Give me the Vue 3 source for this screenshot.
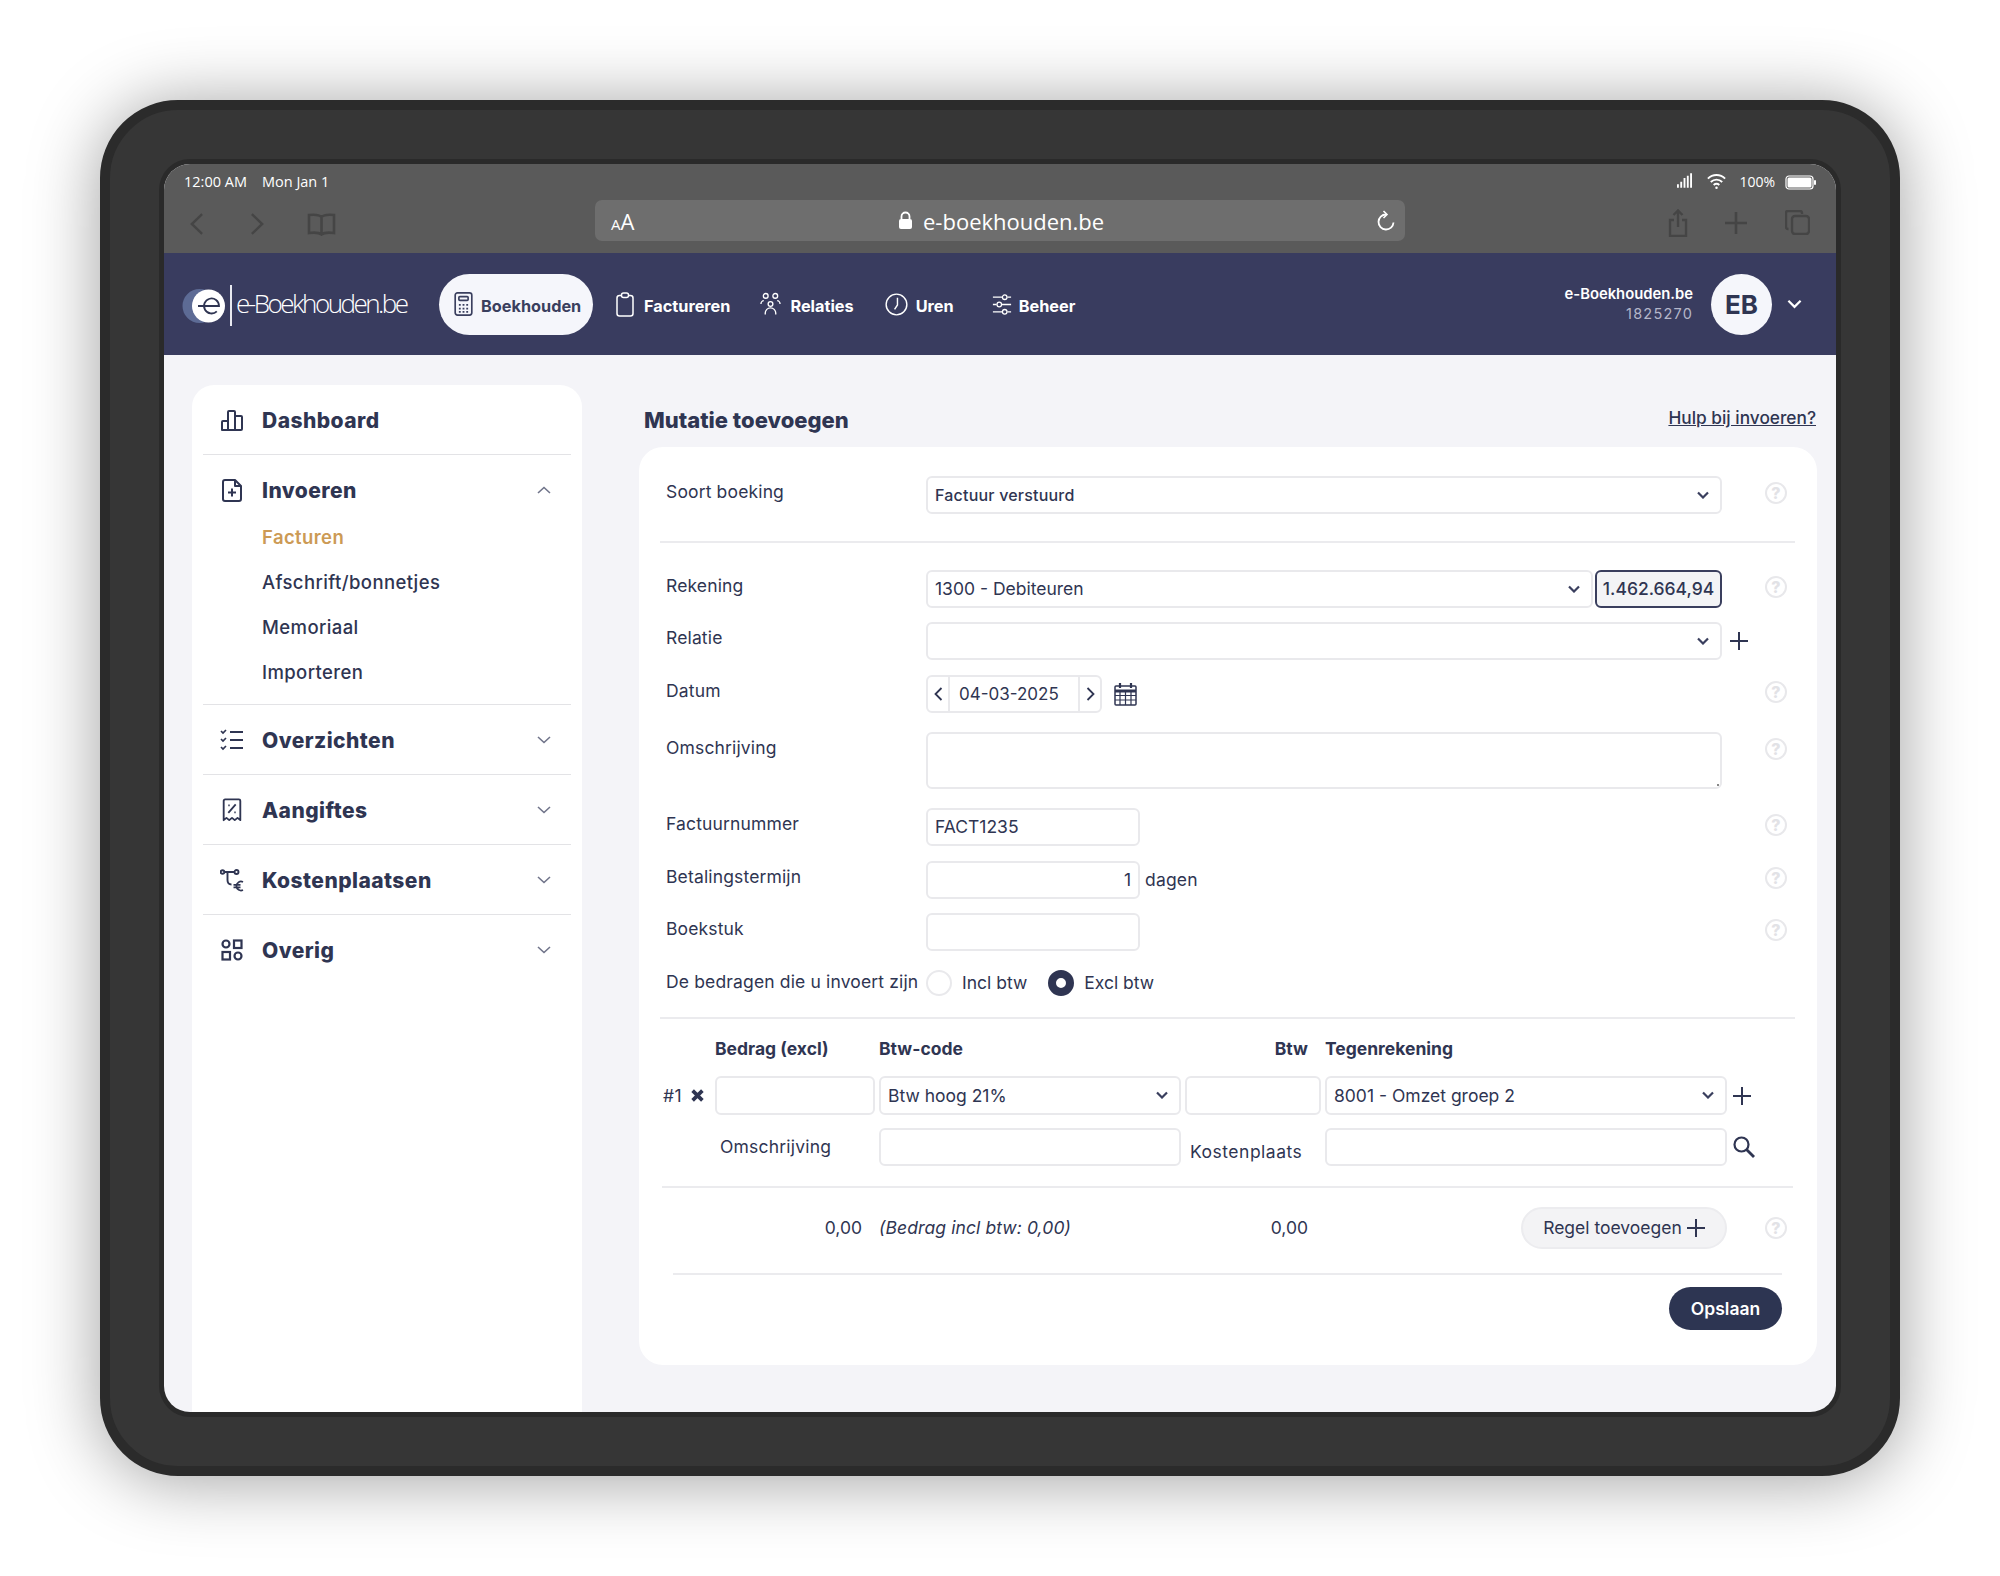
<script setup>
const helpMark = '?'
const subItems = [
  { label: 'Facturen', active: true },
  { label: 'Afschrift/bonnetjes', active: false },
  { label: 'Memoriaal', active: false },
  { label: 'Importeren', active: false },
]
</script>

<template>
  <div class="page">
    <div class="device">
      <div class="screen">
        <div class="chrome">
          <div class="status">
            <span class="status-time">12:00 AM</span>
            <span class="status-date">Mon Jan 1</span>
            <span class="status-right">
              <svg class="ic-signal" viewBox="0 0 16 14" preserveAspectRatio="none"><path d="M1 13v-3M4.500 13V8M8 13V5M11.500 13V3M15 13V1" stroke="#fff" stroke-width="2" fill="none"/></svg>
              <svg class="ic-wifi" viewBox="0 0 22 18" fill="none" stroke="#fff" stroke-width="2"><path d="M2 6.500c5-5 13-5 18 0M5 10c3.500-3.200 8.500-3.200 12 0M8 13.200c1.800-1.500 4.200-1.500 6 0"/><circle cx="11" cy="16" r="1.300" fill="#fff" stroke="none"/></svg>
              <span class="status-pct">100%</span>
              <svg class="ic-batt" viewBox="0 0 31 15"><rect x="1" y="1" width="27" height="13" rx="3" fill="none" stroke="#fff" stroke-width="1.200"/><rect x="2.500" y="2.500" width="24" height="10" rx="1.500" fill="#fff"/><rect x="29" y="5" width="2" height="5" rx="1" fill="#fff"/></svg>
            </span>
          </div>
          <div class="toolbar">
            <div class="tool-left">
              <svg class="t-chev" viewBox="0 0 16 24" fill="none" stroke="#454545" stroke-width="2.600"><path d="M14 1.500 3 12l11 10.500"/></svg>
              <svg class="t-chev t-fwd" viewBox="0 0 16 24" fill="none" stroke="#454545" stroke-width="2.600"><path d="M2 1.500 13 12 2 22.500"/></svg>
              <svg class="t-book" viewBox="0 0 29 23" fill="none" stroke="#454545" stroke-width="2.600"><path d="M14.500 4C12 1.500 6 1.500 2 2v18c4-.5 10-.5 12.500 1.500C17 19.500 23 19.500 27 20V2c-4-.5-10-.5-12.500 2Zm0 0v17"/></svg>
            </div>
            <div class="address">
              <span class="aa"><small>A</small>A</span>
              <span class="url">
                <svg class="ic-lock" viewBox="0 0 15 19"><path d="M3.500 8V5.500a4 4 0 0 1 8 0V8" fill="none" stroke="#fff" stroke-width="1.800"/><rect x="1" y="8" width="13" height="10" rx="2" fill="#fff"/></svg>
                e-boekhouden.be
              </span>
              <svg class="ic-reload" viewBox="0 0 20 22" fill="none" stroke="#fff" stroke-width="1.800"><path d="M11 4.500a7.500 7.500 0 1 0 7.500 8"/><path d="M8.500 1 12 4.500 8.500 8" stroke-width="1.600"/></svg>
            </div>
            <div class="tool-right">
              <svg class="t-share" viewBox="0 0 20 28" fill="none" stroke="#454545" stroke-width="2.400"><path d="M6 11H2v16h16V11h-4M10 18V2M5.500 6 10 1.500 14.500 6"/></svg>
              <svg class="t-plus" viewBox="0 0 24 24" fill="none" stroke="#454545" stroke-width="2.600"><path d="M12 1v22M1 12h22"/></svg>
              <svg class="t-tabs" viewBox="0 0 25 25" fill="none" stroke="#454545" stroke-width="2.400"><rect x="7" y="6" width="17" height="18" rx="3"/><path d="M3.500 19H3a2 2 0 0 1-2-2V3a2 2 0 0 1 2-2h12a2 2 0 0 1 2 2v1"/></svg>
            </div>
          </div>
        </div>

        <header class="nav">
          <div class="logo">
            <svg class="logo-mark" viewBox="0 0 44 36">
              <circle cx="17.500" cy="18" r="17" fill="#5d6b95"/>
              <circle cx="26.500" cy="18" r="16.500" fill="#fff"/>
              <path d="M16 18h21a7.500 7.500 0 1 0-2.200 5.300" fill="none" stroke="#2f3552" stroke-width="1.800"/>
            </svg>
            <span class="logo-bar"></span>
            <span class="logo-text">e-Boekhouden.be</span>
          </div>
          <nav class="menu">
            <a class="menu-item pill">
              <svg class="m-ic" viewBox="0 0 20 26" fill="none" stroke="#3a3f5e" stroke-width="1.800"><rect x="1" y="1" width="18" height="24" rx="2.500"/><rect x="5" y="5" width="10" height="4" rx="1"/><path d="M5 14h2M9 14h2M13 14h2M5 18h2M9 18h2M13 18h2M5 21.500h2M9 21.500h2M13 21.500h2"/></svg>
              Boekhouden
            </a>
            <a class="menu-item fact">
              <svg class="m-ic" viewBox="0 0 18 25" fill="none" stroke="#fff" stroke-width="1.500"><rect x="1" y="3.500" width="16" height="20.500" rx="2.500"/><rect x="5.500" y="1" width="7" height="4.500" rx="2" fill="#393c5f"/></svg>
              Factureren
            </a>
            <a class="menu-item rel">
              <svg class="m-ic" viewBox="0 0 22 24" fill="none" stroke="#fff" stroke-width="1.400"><circle cx="6" cy="3.500" r="2.500"/><circle cx="16" cy="3.500" r="2.500"/><circle cx="11" cy="12" r="2.500"/><path d="M1 12c0-2 1.500-3.500 3-3.500M21 12c0-2-1.500-3.500-3-3.500M5.500 23v-1.500a5.500 5.500 0 0 1 11 0V23"/></svg>
              Relaties
            </a>
            <a class="menu-item ur">
              <svg class="m-ic" viewBox="0 0 24 24" fill="none" stroke="#fff" stroke-width="1.500"><circle cx="12" cy="12" r="10.800"/><path d="M13 5v7.500L10 17"/></svg>
              Uren
            </a>
            <a class="menu-item beh">
              <svg class="m-ic" viewBox="0 0 22 24" fill="none" stroke="#fff" stroke-width="1.400"><path d="M1 4h10M17 4h4M1 12h4M11 12h10M1 20h10M17 20h4"/><circle cx="14" cy="4" r="2.500"/><circle cx="8" cy="12" r="2.500"/><circle cx="14" cy="20" r="2.500"/></svg>
              Beheer
            </a>
          </nav>
          <div class="account">
            <div class="acc-text">
              <div class="acc-name">e-Boekhouden.be</div>
              <div class="acc-id">1825270</div>
            </div>
            <div class="avatar">EB</div>
            <svg class="acc-chev" viewBox="0 0 16 10" fill="none" stroke="#fff" stroke-width="2.400"><path d="M1.500 1.500 8 8l6.500-6.500"/></svg>
          </div>
        </header>

        <div class="body">
          <aside class="side">
            <div class="group">
              <div class="head">
                <svg class="s-ic" viewBox="0 0 24 22" fill="none" stroke="#2f3552" stroke-width="2" stroke-linejoin="round"><path d="M2 21v-8a1 1 0 0 1 1-1h5v9H3a1 1 0 0 1-1-1Zm6 0V3a1 1 0 0 1 1-1h5a1 1 0 0 1 1 1v18Zm7-14h6a1 1 0 0 1 1 1v12a1 1 0 0 1-1 1h-6"/></svg>
                <span class="head-label">Dashboard</span>
              </div>
            </div>
            <div class="group open">
              <div class="head">
                <svg class="s-ic" viewBox="0 0 24 24" fill="none" stroke="#2f3552" stroke-width="2" stroke-linejoin="round"><path d="M5 2h10l6 6v13a2 2 0 0 1-2 2H5a2 2 0 0 1-2-2V4a2 2 0 0 1 2-2Z"/><path d="M15 2v6h6M12 10.500v8M8 14.500h8"/></svg>
                <span class="head-label">Invoeren</span>
                <svg class="s-chev" viewBox="0 0 14 8" fill="none" stroke="#70748a" stroke-width="1.600"><path d="M1 7l6-5.500L13 7"/></svg>
              </div>
              <ul class="subs">
                <li v-for="item in subItems" :key="item.label" class="sub" :class="{ active: item.active }">{{ item.label }}</li>
              </ul>
            </div>
            <div class="group">
              <div class="head">
                <svg class="s-ic" viewBox="0 0 24 22" fill="none" stroke="#2f3552" stroke-width="2"><path d="M10 3h13M10 11h13M10 19h13"/><path d="M1 2l2 2 3-3M1 10l2 2 3-3M1 18l2 2 3-3" stroke-width="1.700"/></svg>
                <span class="head-label">Overzichten</span>
                <svg class="s-chev" viewBox="0 0 14 8" fill="none" stroke="#70748a" stroke-width="1.600"><path d="M1 1l6 5.500L13 1"/></svg>
              </div>
            </div>
            <div class="group">
              <div class="head">
                <svg class="s-ic" viewBox="0 0 24 26" fill="none" stroke="#2f3552" stroke-width="2" stroke-linejoin="round"><path d="M3 24V3a1.500 1.500 0 0 1 1.500-1.500h15A1.500 1.500 0 0 1 21 3v21l-3-2.500-3 2.500-3-2.500L9 24l-3-2.500Z"/><path d="M8 16 16 7M8 8h1.500M14.500 15.500H16"/></svg>
                <span class="head-label">Aangiftes</span>
                <svg class="s-chev" viewBox="0 0 14 8" fill="none" stroke="#70748a" stroke-width="1.600"><path d="M1 1l6 5.500L13 1"/></svg>
              </div>
            </div>
            <div class="group">
              <div class="head">
                <svg class="s-ic" viewBox="0 0 24 22" fill="none" stroke="#2f3552" stroke-width="1.900"><circle cx="2.500" cy="3" r="1.800"/><circle cx="16.500" cy="3" r="2"/><path d="M4.500 3h10M7.500 3v8c0 3 1.500 4.500 4 4.500"/><path d="M23 13a4.500 4.500 0 1 0 0 8M13.500 15.800h7M13.500 18.400h7" stroke-width="1.700"/></svg>
                <span class="head-label">Kostenplaatsen</span>
                <svg class="s-chev" viewBox="0 0 14 8" fill="none" stroke="#70748a" stroke-width="1.600"><path d="M1 1l6 5.500L13 1"/></svg>
              </div>
            </div>
            <div class="group last">
              <div class="head">
                <svg class="s-ic" viewBox="0 0 24 22" fill="none" stroke="#2f3552" stroke-width="2.200"><circle cx="6" cy="5" r="3.500"/><rect x="14" y="1.500" width="7.500" height="7.500"/><rect x="2.500" y="13" width="7.500" height="7.500"/><circle cx="18" cy="17" r="3.500"/></svg>
                <span class="head-label">Overig</span>
                <svg class="s-chev" viewBox="0 0 14 8" fill="none" stroke="#70748a" stroke-width="1.600"><path d="M1 1l6 5.500L13 1"/></svg>
              </div>
            </div>
          </aside>

          <main class="main">
            <div class="title-row">
              <h1 class="title">Mutatie toevoegen</h1>
              <a class="help-link">Hulp bij invoeren?</a>
            </div>
            <section class="card">
              <div class="row first">
                <label class="lbl">Soort boeking</label>
                <div class="field small">
                  <span>Factuur verstuurd</span>
                  <svg class="chev" viewBox="0 0 12 8" fill="none" stroke="#3a3f5e" stroke-width="2.200"><path d="M1 1.500 6 6.500l5-5"/></svg>
                </div>
                <div class="extra"><span class="help">{{ helpMark }}</span></div>
              </div>
              <hr class="rule r1" />
              <div class="row">
                <label class="lbl">Rekening</label>
                <div class="split">
                  <div class="field">
                    <span>1300 - Debiteuren</span>
                    <svg class="chev" viewBox="0 0 12 8" fill="none" stroke="#3a3f5e" stroke-width="2.200"><path d="M1 1.500 6 6.500l5-5"/></svg>
                  </div>
                  <div class="balance">1.462.664,94</div>
                </div>
                <div class="extra"><span class="help">{{ helpMark }}</span></div>
              </div>
              <div class="row g14">
                <label class="lbl">Relatie</label>
                <div class="field">
                  <span></span>
                  <svg class="chev" viewBox="0 0 12 8" fill="none" stroke="#3a3f5e" stroke-width="2.200"><path d="M1 1.500 6 6.500l5-5"/></svg>
                </div>
                <div class="extra">
                  <svg class="plus" viewBox="0 0 18 18" fill="none" stroke="#2f3552" stroke-width="2"><path d="M9 0v18M0 9h18"/></svg>
                </div>
              </div>
              <div class="row g15">
                <label class="lbl">Datum</label>
                <div class="date-wrap">
                  <div class="date">
                    <span class="date-btn">
                      <svg class="date-chev" viewBox="0 0 9 14" fill="none" stroke="#2f3552" stroke-width="1.800"><path d="M7.500 1 1.500 7l6 6"/></svg>
                    </span>
                    <span class="date-val">04-03-2025</span>
                    <span class="date-btn next">
                      <svg class="date-chev" viewBox="0 0 9 14" fill="none" stroke="#2f3552" stroke-width="1.800"><path d="M1.500 1l6 6-6 6"/></svg>
                    </span>
                  </div>
                  <svg class="cal" viewBox="0 0 23 24" fill="none" stroke="#2f3552" stroke-width="1.500"><rect x="1" y="4" width="21" height="19" rx="1"/><path d="M1 9h21" stroke-width="3"/><path d="M1 13.500h21M1 18h21M6 9v14M11.500 9v14M17 9v14" stroke-width="1.200"/><path d="M6 1v5M17 1v5" stroke-width="2.200"/></svg>
                </div>
                <div class="extra"><span class="help">{{ helpMark }}</span></div>
              </div>
              <div class="row g19">
                <label class="lbl">Omschrijving</label>
                <div class="field area"></div>
                <div class="extra"><span class="help">{{ helpMark }}</span></div>
              </div>
              <div class="row g19">
                <label class="lbl">Factuurnummer</label>
                <div class="field narrow"><span>FACT1235</span></div>
                <div class="extra"><span class="help">{{ helpMark }}</span></div>
              </div>
              <div class="row g15">
                <label class="lbl">Betalingstermijn</label>
                <div class="with-unit">
                  <div class="field narrow end"><span>1</span></div>
                  <span class="unit">dagen</span>
                </div>
                <div class="extra"><span class="help">{{ helpMark }}</span></div>
              </div>
              <div class="row g14">
                <label class="lbl">Boekstuk</label>
                <div class="field narrow"></div>
                <div class="extra"><span class="help">{{ helpMark }}</span></div>
              </div>
              <div class="row radio-row">
                <label class="lbl inline">De bedragen die u invoert zijn</label>
                <div class="radios">
                  <span class="radio"></span>
                  <span class="radio-label">Incl btw</span>
                  <span class="radio on"></span>
                  <span class="radio-label">Excl btw</span>
                </div>
              </div>
              <hr class="rule r2" />

              <div class="lines heads">
                <span></span>
                <span class="th">Bedrag (excl)</span>
                <span class="th">Btw-code</span>
                <span class="th right">Btw</span>
                <span class="th">Tegenrekening</span>
              </div>
              <div class="lines line-a">
                <div class="line-no">
                  <span>#1</span>
                  <svg class="del" viewBox="0 0 12 12" fill="none" stroke="#2f3552" stroke-width="3.400"><path d="M1.500 1.500l9 9M10.500 1.500l-9 9"/></svg>
                </div>
                <div class="field tall"></div>
                <div class="field tall">
                  <span>Btw hoog 21%</span>
                  <svg class="chev" viewBox="0 0 12 8" fill="none" stroke="#3a3f5e" stroke-width="2.200"><path d="M1 1.500 6 6.500l5-5"/></svg>
                </div>
                <div class="field tall"></div>
                <div class="field tall">
                  <span>8001 - Omzet groep 2</span>
                  <svg class="chev" viewBox="0 0 12 8" fill="none" stroke="#3a3f5e" stroke-width="2.200"><path d="M1 1.500 6 6.500l5-5"/></svg>
                </div>
                <svg class="plus line-plus" viewBox="0 0 18 18" fill="none" stroke="#2f3552" stroke-width="2"><path d="M9 0v18M0 9h18"/></svg>
              </div>
              <div class="lines line-b">
                <span></span>
                <span class="mini">Omschrijving</span>
                <div class="field"></div>
                <span class="mini low">Kostenplaats</span>
                <div class="field"></div>
                <svg class="search" viewBox="0 0 22 22" fill="none" stroke="#2f3552" stroke-width="2.200"><circle cx="8.500" cy="8.500" r="7"/><path d="M13.500 13.500 21 21" stroke-width="2.800"/></svg>
              </div>
              <hr class="rule r3" />
              <div class="lines totals">
                <span></span>
                <span class="num">0,00</span>
                <span class="incl">(Bedrag incl btw: 0,00)</span>
                <span class="num">0,00</span>
                <div class="add-wrap">
                  <button class="add">Regel toevoegen
                    <svg class="add-plus" viewBox="0 0 18 18" fill="none" stroke="#2f3552" stroke-width="2"><path d="M9 0v18M0 9h18"/></svg>
                  </button>
                </div>
                <div class="extra"><span class="help">{{ helpMark }}</span></div>
              </div>
              <hr class="rule r4" />
              <div class="save-row"><button class="save">Opslaan</button></div>
            </section>
          </main>
        </div>
      </div>
    </div>
  </div>
</template>

<style>
html, body { margin: 0; background: #fff; }
</style>

<style scoped>
* { box-sizing: border-box; }
.page { width: 2000px; height: 1576px; padding: 100px; font-family: Inter, "Liberation Sans", sans-serif; color: #2f3552; }
.device { width: 1800px; height: 1376px; border: 10px solid #2b2b2b; border-radius: 78px; background: #363636; padding: 54px; box-shadow: 0 4px 70px rgba(0, 0, 0, .38); }
.screen { width: 1672px; height: 1248px; border-radius: 26px; overflow: hidden; background: #f4f4f8; box-shadow: 0 0 0 5px #2a2a2a; display: flex; flex-direction: column; }

.chrome { height: 89px; background: #5a5a5a; color: #fff; font-family: "Open Sans", sans-serif; flex: none; }
.status { height: 36px; padding: 0 20px 0 20px; display: flex; align-items: center; font-size: 14.500px; }
.status-time, .status-date, .status-pct { position: relative; top: -1px; }
.status-date { margin-left: 15px; }
.status-right { margin-left: auto; display: flex; align-items: center; }
.ic-signal { width: 15px; height: 17px; margin-top: -3px; }
.ic-wifi { width: 21px; height: 18px; margin-left: 14px; margin-top: -2px; }
.status-pct { margin-left: 12px; font-size: 14px; }
.ic-batt { width: 31px; height: 15px; margin-left: 10px; }
.toolbar { height: 53px; display: flex; align-items: flex-start; position: relative; }
.tool-left { width: 431px; height: 48px; padding-left: 25px; display: flex; align-items: center; }
.t-chev { width: 15px; height: 24px; }
.t-fwd { margin-left: 46px; }
.t-book { width: 29px; height: 23px; margin-left: 42px; }
.address { width: 810px; height: 41px; background: #6e6e6e; border-radius: 7px; display: flex; align-items: center; padding: 0 10px 0 16px; position: relative; }
.aa { font-size: 22px; line-height: 1; }
.aa small { font-size: 15px; }
.url { position: absolute; left: 303px; top: 0; height: 41px; display: flex; align-items: center; font-size: 22px; }
.ic-lock { width: 15px; height: 19px; margin-right: 10px; }
.ic-reload { width: 20px; height: 22px; margin-left: auto; }
.tool-right { flex: 1; height: 45px; display: flex; align-items: center; padding-left: 263px; }
.t-share { width: 20px; height: 28px; }
.t-plus { width: 24px; height: 24px; margin-left: 36px; }
.t-tabs { width: 25px; height: 25px; margin-left: 37px; }

.nav { height: 102px; flex: none; background: #393c5f; display: flex; align-items: center; color: #fff; padding: 0 34px 0 18px; }
.logo { display: flex; align-items: center; width: 257px; margin-top: 3px; }
.logo-mark { width: 44px; height: 36px; flex: none; }
.logo-bar { width: 2px; height: 41px; background: #e8e9f0; margin-left: 4px; }
.logo-text { font-family: "Open Sans", sans-serif; font-weight: 300; font-size: 26px; letter-spacing: -2.500px; margin: -5px 0 0 4px; white-space: nowrap; }
.menu { display: flex; align-items: center; height: 61px; }
.menu-item { display: flex; align-items: center; font-size: 16.300px; font-weight: 700; white-space: nowrap; }
.pill { width: 154px; height: 61px; background: #f5f6fb; border-radius: 31px; color: #3a3f5e; padding: 3px 0 0 15px; }
.pill .m-ic { width: 19px; height: 24px; margin-right: 8px; margin-top: -3px; }
.fact { margin-left: 23px; margin-top: 4px; }
.fact .m-ic { width: 18px; height: 25px; margin-right: 10px; margin-top: -4px; }
.rel { margin-left: 30px; margin-top: 4px; }
.rel .m-ic { width: 21px; height: 24px; margin-right: 9px; margin-top: -4px; }
.ur { margin-left: 31px; margin-top: 4px; }
.ur .m-ic { width: 23px; height: 23px; margin-right: 8px; margin-top: -4px; }
.beh { margin-left: 38px; margin-top: 4px; }
.beh .m-ic { width: 20px; height: 23px; margin-right: 7px; margin-top: -4px; }
.account { margin-left: auto; display: flex; align-items: center; }
.acc-text { text-align: right; margin-right: 18px; }
.acc-name { font-size: 14.800px; font-weight: 600; line-height: 19px; }
.acc-id { font-size: 14.500px; line-height: 19px; color: #b4b6c9; letter-spacing: 1.200px; }
.avatar { width: 61px; height: 61px; border-radius: 50%; background: #f5f6fb; color: #2f3552; font-weight: 700; font-size: 26px; display: flex; align-items: center; justify-content: center; }
.acc-chev { width: 15px; height: 10px; margin-left: 15px; }

.body { flex: 1; display: flex; min-height: 0; }
.side { width: 390px; margin: 30px 0 0 28px; background: #fff; border-radius: 22px 22px 0 0; padding: 0 11px; flex: none; }
.group { border-bottom: 1px solid #e3e3e6; }
.group.last { border-bottom: 0; }
.head { height: 69px; display: flex; align-items: center; padding-left: 17px; padding-right: 20px; }
.s-ic { width: 24px; height: 24px; flex: none; }
.head-label { margin-left: 18px; padding-top: 2px; font-weight: 800; font-size: 21px; letter-spacing: .45px; color: #2f3552; }
.s-chev { width: 14px; height: 8px; margin-left: auto; }
.subs { list-style: none; margin: -10px 0 0; padding: 0 0 10px 59px; }
.sub { height: 45px; line-height: 46px; font-size: 18.500px; font-weight: 500; letter-spacing: .4px; color: #2f3552; }
.sub.active { color: #cc9a55; font-weight: 600; }

.main { width: 1178px; margin-left: 57px; flex: none; }
.title-row { height: 92px; padding: 48px 1px 0 5px; display: flex; justify-content: space-between; align-items: flex-start; }
.title { margin: 0; font-size: 22px; font-weight: 800; line-height: 34px; color: #2f3552; }
.help-link { font-size: 17.300px; font-weight: 500; line-height: 30px; text-decoration: underline; color: #2f3552; }
.card { height: 918px; background: #fff; border-radius: 24px; padding: 29px 22px 0 21px; }

.row { display: grid; grid-template-columns: 266px 796px 1fr; }
.g14 { margin-top: 14px; }
.g15 { margin-top: 15px; }
.g19 { margin-top: 19px; }
.lbl { padding-left: 6px; font-size: 17.500px; letter-spacing: .15px; line-height: 31px; color: #2f3552; white-space: nowrap; }
.field { height: 38px; border: 2px solid #e9e9ec; border-radius: 6px; background: #fff; padding: 0 11px 1px 7px; display: flex; align-items: center; justify-content: space-between; font-size: 17.500px; color: #2f3552; }
.field.small { font-size: 16px; font-weight: 500; letter-spacing: .2px; }
.field.narrow { width: 214px; }
.field.end { justify-content: flex-end; padding-right: 7px; }
.field.area { height: 57px; position: relative; }
.field.area::after { content: ""; position: absolute; right: 1px; bottom: 1px; width: 2px; height: 2px; background: #888; }
.field.tall { height: 39px; }
.chev { width: 12px; height: 8px; flex: none; }
.extra { padding: 0 8px 0 8px; display: flex; align-items: flex-start; }
.help { width: 22px; height: 22px; margin: 6px 0 0 auto; border: 2px solid #e8e8eb; border-radius: 50%; color: #e2e2e6; font-size: 16px; font-weight: 800; line-height: 18px; text-align: center; flex: none; }
.plus { width: 18px; height: 18px; margin-top: 10px; }
.rule { border: 0; height: 2px; background: #ebebee; margin: 0; }
.r1 { margin: 27px 0 27px; }
.split { display: flex; gap: 2px; }
.split .field { flex: 1; }
.balance { width: 127px; height: 38px; border: 2px solid #3a3f5e; border-radius: 6px; background: #f3f4f6; font-size: 17.500px; font-weight: 500; padding-bottom: 1px; display: flex; align-items: center; justify-content: center; }
.date-wrap { display: flex; align-items: center; }
.date { width: 176px; height: 38px; border: 2px solid #e9e9ec; border-radius: 6px; display: flex; align-items: center; }
.date-btn { width: 22px; height: 100%; display: flex; align-items: center; justify-content: center; border-right: 2px solid #e9e9ec; flex: none; }
.date-btn.next { border-right: 0; border-left: 2px solid #e9e9ec; }
.date-chev { width: 9px; height: 14px; }
.date-val { flex: 1; padding-left: 9px; font-size: 17px; }
.cal { width: 23px; height: 24px; margin-left: 12px; }
.with-unit { display: flex; align-items: center; }
.unit { margin: -2px 0 0 5px; font-size: 17.500px; letter-spacing: .2px; }
.radio-row { margin-top: 19px; }
.lbl.inline { line-height: 24px; }
.radios { display: flex; align-items: center; height: 26px; }
.radio { width: 26px; height: 26px; border-radius: 50%; border: 2px solid #e9e9ec; flex: none; }
.radio.on { background: #fff; border: 8px solid #2f3552; margin-left: 21px; }
.radio-label { margin: -2px 0 0 10px; font-size: 17.500px; }
.r2 { margin-top: 21px; }

.lines { display: grid; grid-template-columns: 51px 160px 302px 136px 402px 1fr; column-gap: 4px; }
.heads { height: 57px; align-items: center; padding-top: 2px; }
.th { font-size: 17.500px; font-weight: 700; white-space: nowrap; }
.th.right { text-align: right; padding-right: 13px; }
.line-no { display: flex; align-items: center; font-size: 17.500px; letter-spacing: .5px; padding-left: 3px; }
.del { width: 13px; height: 13px; margin-left: 9px; flex: none; }
.line-plus { margin: 11px 0 0 2px; }
.line-a { height: 39px; }
.line-b { margin-top: 13px; height: 38px; }
.mini { font-size: 17.500px; letter-spacing: .2px; padding-left: 5px; line-height: 38px; white-space: nowrap; }
.mini.low { padding-left: 5px; letter-spacing: .5px; line-height: 48px; height: 38px; }
.search { width: 22px; height: 22px; margin: 8px 0 0 2px; }
.r3 { margin: 20px 2px 0; }
.totals { height: 85px; padding-bottom: 6px; align-items: center; font-size: 17.500px; }
.num { text-align: right; padding-right: 13px; }
.incl { font-style: italic; letter-spacing: .1px; white-space: nowrap; }
.add-wrap { display: flex; justify-content: flex-end; }
.add { width: 206px; height: 42px; border: 2px solid #ececef; border-radius: 21px; background: #f3f3f5; display: flex; align-items: center; justify-content: center; font: inherit; color: #2f3552; gap: 5px; padding: 0; white-space: nowrap; }
.add-plus { width: 18px; height: 18px; }
.totals .extra { align-self: center; }
.totals .help { margin-top: 0; }
.r4 { margin: 0 13px 0 13px; }
.save-row { display: flex; justify-content: flex-end; margin: 12px 13px 0 0; }
.save { width: 113px; height: 43px; border: 0; border-radius: 22px; background: #2d3552; color: #fff; font: inherit; font-size: 17.500px; font-weight: 600; }
</style>
